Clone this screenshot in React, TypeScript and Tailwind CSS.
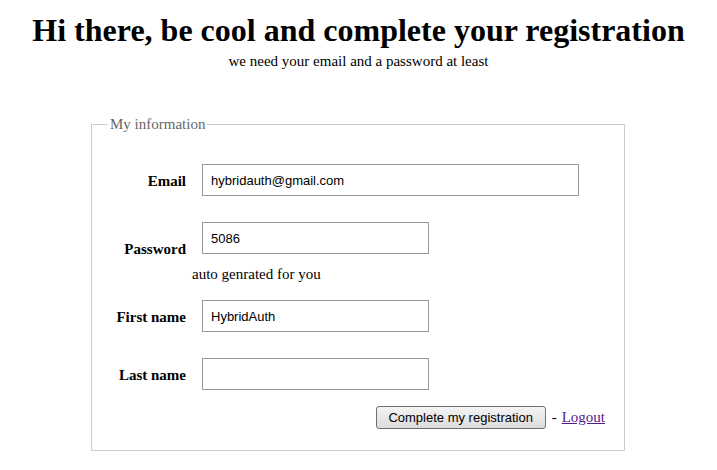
import React from "react";

const serif = { fontFamily: '"Liberation Serif", "Times New Roman", serif' };

function Field({ label, value, wide }: { label: string; value: string; wide?: boolean }) {
    return (
        <div className="flex items-center">
            <label className="mt-[2px] w-[94px] text-right text-[15px] font-bold leading-[18px] text-black">{label}</label>
            <input
                defaultValue={value}
                className={`ml-4 h-8 ${wide ? "w-[377px]" : "w-[227px]"} border border-[#999] bg-white px-2 text-[13px] text-black font-['Liberation_Sans',Arial,sans-serif] outline-none`}
            />
        </div>
    );
}

export default function App() {
    return (
        <div className="min-h-[470px] bg-white text-black" style={serif}>
            <h1 className="pt-[12px] text-center text-[32px] font-bold leading-[37px]">Hi there, be cool and complete your registration</h1>
            <p className="mt-[3px] text-center text-[15px] leading-[18px]">we need your email and a password at least</p>

            <fieldset className="ml-[91px] mt-[45px] w-[534px] border border-[#ccc] pb-[21px] pr-[19px]">
                <legend className="ml-[16px] px-[2px] text-[15px] leading-[18px] text-[#666]">My information</legend>

                <div className="mt-[31px]">
                    <Field label="Email" value="hybridauth@gmail.com" wide />
                </div>

                <div className="mt-[26px] flex items-start">
                    <label className="w-[94px] pt-[18px] text-right text-[15px] font-bold leading-[18px]">Password</label>
                    <div className="flex flex-col">
                        <input
                            defaultValue="5086"
                            className="ml-4 h-8 w-[227px] border border-[#999] bg-white px-2 text-[13px] font-['Liberation_Sans',Arial,sans-serif] outline-none"
                        />
                        <span className="ml-[6px] mt-[11px] text-[15px] leading-[18px]">auto genrated for you</span>
                    </div>
                </div>

                <div className="mt-[17px]">
                    <Field label="First name" value="HybridAuth" />
                </div>

                <div className="mt-[26px]">
                    <Field label="Last name" value="" />
                </div>

                <div className="mt-[16px] flex items-center justify-end">
                    <button className="h-[23px] w-[170px] rounded-[3px] border border-[#707070] bg-gradient-to-b from-[#f4f4f4] to-[#dcdcdc] text-[13px] text-black font-['Liberation_Sans',Arial,sans-serif]">
                        Complete my registration
                    </button>
                    <span className="ml-[6px] text-[15px]">-</span>
                    <a href="#" className="ml-[5px] text-[15px] text-[#551a8b] underline">Logout</a>
                </div>
            </fieldset>
        </div>
    );
}
